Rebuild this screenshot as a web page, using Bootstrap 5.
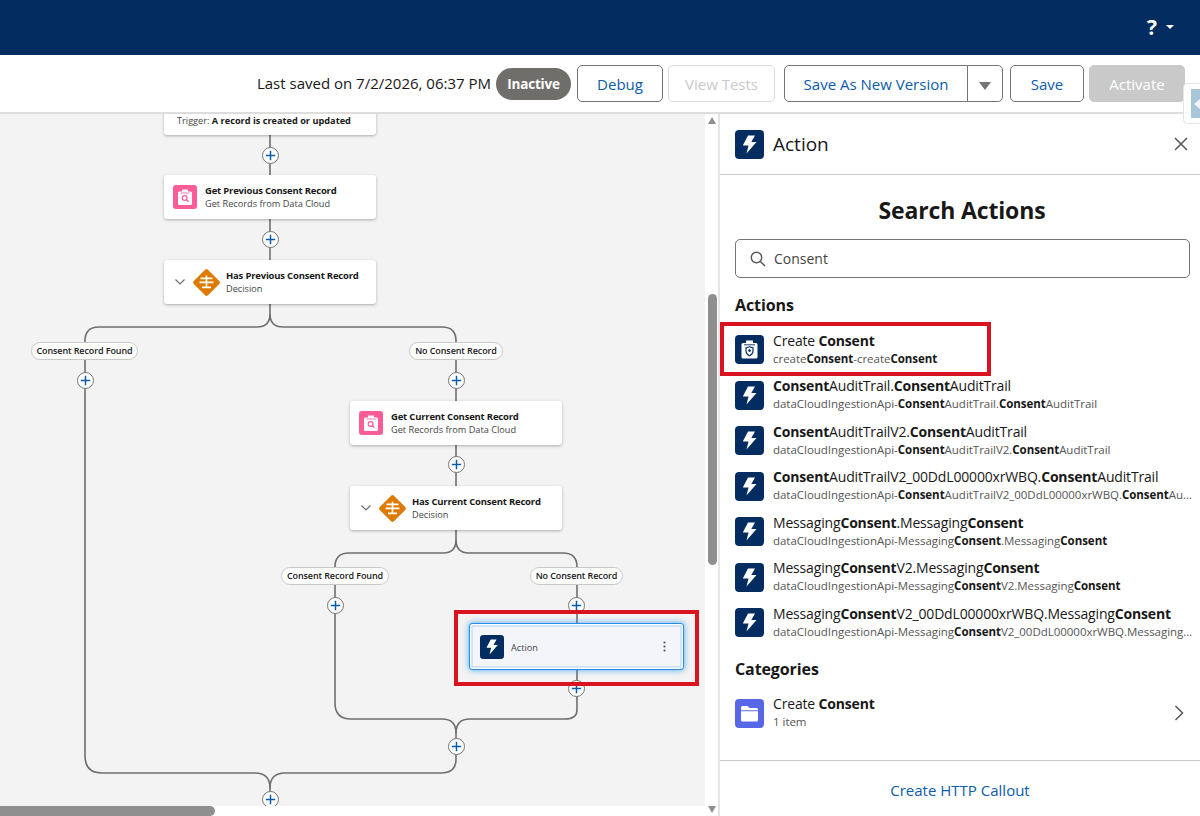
<!DOCTYPE html>
<html lang="en">
<head>
    <meta charset="UTF-8">
    <meta name="viewport" content="width=device-width, initial-scale=1.0">
    <title>Flow Builder</title>
    <link href="https://cdn.jsdelivr.net/npm/bootstrap@5.3.0/dist/css/bootstrap.min.css" rel="stylesheet">
    <style>
        body { height: 816px; overflow: hidden; font-family: "Open Sans", "Liberation Sans", sans-serif; color: #181818; background: #fff; }
        .top-bar { height: 55px; background: #032d60; color: #fff; padding-right: 26px; }
        .help-mark { font-size: 21px; font-weight: 700; line-height: 1; }
        .help-caret { width: 0; height: 0; border-left: 4px solid transparent; border-right: 4px solid transparent; border-top: 4px solid #fff; margin-left: 9px; margin-top: -2px; }
        .tool-bar { height: 59px; border-bottom: 2px solid #ddd; padding-right: 15px; position: relative; z-index: 2; background: #fff; }
        .saved-text { font-size: 15px; margin-right: 5px; }
        .state-pill { background: #706e6b; color: #fff; font-size: 13.5px; font-weight: 700; letter-spacing: -.2px; border-radius: 16px; width: 75px; height: 32px; line-height: 32px; text-align: center; margin-right: 6px; }
        .tb-btn { height: 37px; font-size: 15px; padding: 2px 0 0; border: 1px solid #747474; border-radius: 5px; color: #0b5cab; background: #fff; }
        .tb-btn:hover { color: #0b5cab; background: #fff; border-color: #747474; }
        .tb-btn:disabled { opacity: 1; }
        .btn-debug { width: 86px; margin-right: 5px; }
        .btn-tests, .btn-tests:disabled { width: 107px; margin-right: 9px; color: #c9c9c9; border-color: #dcdcdc; background: #fff; }
        .btn-newver { width: 184px; }
        .btn-arrow { width: 36px; }
        .arrow-down { display: inline-block; width: 0; height: 0; border-left: 6px solid transparent; border-right: 6px solid transparent; border-top: 8px solid #747474; }
        .btn-save { width: 74px; margin-left: 7px; margin-right: 5px; }
        .btn-activate, .btn-activate:disabled { width: 96px; background: #c9c9c9; border-color: #c9c9c9; color: #fff; }
        .side-tab { position: absolute; right: 0; top: 28px; width: 17px; height: 41px; background: #fff; border: 1px solid #e5e5e5; border-right: 0; border-radius: 5px 0 0 5px; padding: 5px 0 5px 7px; }
        .side-tab-in { display: block; height: 100%; background: #a9c6d8; position: relative; }
        .side-tab-in::after { content: ""; position: absolute; left: 3px; top: 10px; border-top: 5px solid transparent; border-bottom: 5px solid transparent; border-right: 6px solid #f1f4f6; }
        .main-area { height: 702px; }
        .canvas-col { width: 705px; position: relative; background: #fff; }
        .flow-canvas { width: 705px; height: 692px; background: #f3f3f3; position: relative; overflow: hidden; }
        .flow-lines { position: absolute; left: 0; top: 0; }
        .h-track { height: 10px; background: #fff; }
        .h-thumb { width: 215px; height: 10px; background: #8f8f8f; border-radius: 0 5px 5px 0; }
        .v-track { width: 13px; position: relative; background: #fff; }
        .v-thumb { position: absolute; left: 3px; top: 180px; width: 9px; height: 271px; background: #8f8f8f; border-radius: 5px; }
        .v-up, .v-down { position: absolute; left: 3px; width: 0; height: 0; border-left: 4.5px solid transparent; border-right: 4.5px solid transparent; }
        .v-up { top: 3px; border-bottom: 7px solid #8f8f8f; }
        .v-down { bottom: 3px; border-top: 7px solid #8f8f8f; }

        .flow-node { position: absolute; width: 212px; height: 44px; background: #fff; border-radius: 3px; box-shadow: 0 1px 3px rgba(0,0,0,.3); display: flex; align-items: center; }
        .node-title { font-size: 9.5px; font-weight: 700; letter-spacing: -.2px; line-height: 13px; white-space: nowrap; }
        .node-sub { font-size: 9.2px; line-height: 13px; color: #444; white-space: nowrap; }
        .node-pink { width: 24px; height: 24px; margin: 0 8px 0 9px; flex: none; }
        .node-chev { width: 10px; height: 6px; margin: 0 7px 0 11px; flex: none; }
        .node-diamond { width: 29px; height: 29px; margin: 0 5px 0 0; flex: none; }
        .n-trigger { left: 164px; top: -20px; height: 41px; align-items: flex-end; padding: 0 0 7px 13px; font-size: 9.2px; color: #444; }
        .n-trigger b { color: #181818; }
        .n-prev { left: 164px; top: 61px; }
        .n-hasprev { left: 164px; top: 146px; }
        .n-cur { left: 350px; top: 287px; }
        .n-hascur { left: 350px; top: 372px; }
        .n-action { left: 469px; top: 509px; width: 215px; height: 47px; background: #f3f5fb; border: 1.5px solid #2a8fe0; box-shadow: inset 0 0 0 1.5px #fff, inset 0 0 0 2.5px #a9d3f5, 0 0 6px rgba(27,150,255,.8); padding-left: 10px; }
        .n-action svg.bolt-sm { width: 24px; height: 24px; flex: none; }
        .n-action span { font-size: 9.2px; color: #444; margin: 3px 0 0 7px; }
        .n-kebab { position: absolute; right: 17px; top: 17px; width: 3px; height: 11px; }
        .branch-pill { position: absolute; height: 18px; line-height: 16px; background: #fff; border: 1px solid #c9c9c9; border-radius: 9px; font-size: 9px; font-weight: 600; letter-spacing: -.1px; text-align: center; white-space: nowrap; }
        .p-found1 { left: 31px; top: 228px; width: 107px; }
        .p-none1 { left: 409px; top: 228px; width: 94px; }
        .p-found2 { left: 281px; top: 453px; width: 108px; }
        .p-none2 { left: 530px; top: 453px; width: 93px; }
        .add-dot { position: absolute; width: 17px; height: 17px; margin: -8.5px 0 0 -8.5px; }
        .d1 { left: 270px; top: 41px; } .d2 { left: 270px; top: 125px; } .d3 { left: 85px; top: 266px; }
        .d4 { left: 456px; top: 266px; } .d5 { left: 456px; top: 350px; } .d6 { left: 335px; top: 491px; }
        .d7 { left: 576px; top: 491px; } .d8 { left: 576px; top: 574px; } .d9 { left: 456px; top: 632px; } .d10 { left: 270px; top: 685px; }
        .red-box { position: absolute; border: 4px solid #d9131f; pointer-events: none; }
        .rb-node { left: 454px; top: 496px; width: 245px; height: 76px; }

        .side-panel { width: 482px; border-left: 2px solid #e5e5e5; height: 702px; position: relative; }
        .panel-head { height: 61px; border-bottom: 1px solid #c9c9c9; padding: 0 12px 0 15px; }
        .panel-title { font-size: 19px; margin-left: 9px; }
        .panel-icon { width: 29px; height: 29px; flex: none; }
        .panel-close { width: 14px; height: 14px; margin-left: auto; }
        .panel-body-area { height: 585px; padding: 0 2px 0 15px; }
        .search-title { font-size: 23px; font-weight: 700; letter-spacing: -.15px; text-align: center; line-height: 33px; padding: 19px 9px 0 0; margin: 0; height: 64px; }
        .search-wrap { position: relative; height: 39px; margin-right: 8px; }
        .search-input { height: 39px; border: 1px solid #747474; border-radius: 5px; font-size: 14px; padding-left: 38px; color: #444; font-family: inherit; }
        .search-ico { position: absolute; left: 15px; top: 12px; width: 16px; height: 16px; }
        .sec-head { font-size: 16px; font-weight: 700; letter-spacing: -.1px; line-height: 24px; margin: 0; }
        .sec-actions { padding-top: 15px; height: 49px; }
        .act-row { height: 45.5px; display: flex; align-items: center; padding: 0; border: 0; border-radius: 0; background: transparent; }
        .act-text { margin-left: 9px; min-width: 0; flex: 1; margin-top: -1px; }
        .act-title { font-size: 14px; letter-spacing: -.17px; line-height: 18px; white-space: nowrap; color: #181818; }
        .act-sub { font-size: 11.5px; letter-spacing: -.03px; line-height: 17px; white-space: nowrap; overflow: hidden; text-overflow: ellipsis; color: #555; }
        .act-title b, .act-sub b { color: #181818; }
        .sec-cats { padding-top: 11px; height: 45px; }
        .rb-item { left: 0; top: 208px; width: 271px; height: 54px; }
        .cat-chev { width: 10px; height: 16px; margin-right: 14px; flex: none; }
        .panel-foot { height: 56px; border-top: 1px solid #c9c9c9; font-size: 15px; padding-top: 3px; }
        .panel-foot a { color: #0b5cab; text-decoration: none; }
    </style>
</head>
<body>
    <svg width="0" height="0" class="position-absolute">
        <symbol id="i-bolt" viewBox="0 0 29 29">
            <rect width="29" height="29" rx="4" fill="#032d60"/>
            <path d="M13 5.5 H20 L16.3 12 H21.5 L11.5 23.5 L13.5 15.5 H7.8 Z" fill="#fff"/>
        </symbol>
        <symbol id="i-pink" viewBox="0 0 24 24">
            <rect width="24" height="24" rx="3" fill="#fe5c97"/>
            <path d="M9 4.5 H15 V6.5 H17.5 Q19 6.5 19 8 V18.5 Q19 20 17.5 20 H6.5 Q5 20 5 18.5 V8 Q5 6.5 6.5 6.5 H9 Z" fill="#fff"/>
            <path d="M7.5 8 H16.5" stroke="#fe5c97" stroke-width=".8"/>
            <circle cx="11.6" cy="13" r="2.4" fill="none" stroke="#fe5c97" stroke-width="1.2"/>
            <path d="M13.4 14.8 L15.5 16.8" stroke="#fe5c97" stroke-width="1.2"/>
        </symbol>
        <symbol id="i-decide" viewBox="0 0 29 29">
            <rect x="4.5" y="4.5" width="20" height="20" rx="2" fill="#dd7a01" transform="rotate(45 14.5 14.5)"/>
            <path d="M13.7 7.5 H15.3 V9.5 H20.5 V11.3 H15.3 V13.5 H21.5 V15.3 H15.3 V18.5 H19 V20.3 H10 V18.5 H13.7 V15.3 H7.5 V13.5 H13.7 V11.3 H8.5 V9.5 H13.7 Z" fill="#fff"/>
        </symbol>
        <symbol id="i-add" viewBox="0 0 17 17">
            <circle cx="8.5" cy="8.5" r="8" fill="#fff" stroke="#747474" stroke-width="1"/>
            <path d="M8.5 3.8 V13.2 M3.8 8.5 H13.2" stroke="#0b5cab" stroke-width="1.5"/>
        </symbol>
        <symbol id="i-consent" viewBox="0 0 29 29">
            <rect width="29" height="29" rx="4" fill="#032d60"/>
            <path d="M11 5.5 H18 V8 H21 Q22.5 8 22.5 9.5 V22 Q22.5 23.5 21 23.5 H8 Q6.5 23.5 6.5 22 V9.5 Q6.5 8 8 8 H11 Z" fill="#fff"/>
            <path d="M9 9.8 H20" stroke="#032d60" stroke-width=".9"/>
            <path d="M14.5 11.8 L18 13 V15.8 Q18 19 14.5 20.8 Q11 19 11 15.8 V13 Z" fill="none" stroke="#032d60" stroke-width="1.2"/>
            <circle cx="14.5" cy="15.6" r="1.3" fill="#032d60"/>
        </symbol>
        <symbol id="i-folder" viewBox="0 0 29 29">
            <rect width="29" height="29" rx="4" fill="#5867e8"/>
            <path d="M6 8.5 Q6 7 7.5 7 H12.5 L14.5 9 H21.5 Q23 9 23 10.5 V11.2 H6 Z M6 12.3 H23 V21 Q23 22.5 21.5 22.5 H7.5 Q6 22.5 6 21 Z" fill="#fff"/>
        </symbol>
    </svg>

    <!-- Top bar -->
    <div class="top-bar d-flex align-items-center justify-content-end">
        <span class="help-mark">?</span>
        <span class="help-caret"></span>
    </div>

    <!-- Toolbar -->
    <div class="tool-bar d-flex align-items-center justify-content-end">
        <span class="saved-text">Last saved on 7/2/2026, 06:37 PM</span>
        <span class="state-pill">Inactive</span>
        <button class="btn tb-btn btn-debug">Debug</button>
        <button class="btn tb-btn btn-tests" disabled>View Tests</button>
        <div class="btn-group">
            <button class="btn tb-btn btn-newver">Save As New Version</button>
            <button class="btn tb-btn btn-arrow"><span class="arrow-down"></span></button>
        </div>
        <button class="btn tb-btn btn-save">Save</button>
        <button class="btn tb-btn btn-activate" disabled>Activate</button>
        <span class="side-tab"><span class="side-tab-in"></span></span>
    </div>

    <div class="main-area d-flex">
        <!-- Canvas -->
        <div class="canvas-col">
            <div class="flow-canvas">
                <svg class="flow-lines" width="705" height="692" fill="none" stroke="#6f6f6f" stroke-width="1.6">
                    <path d="M270 21 V146"/>
                    <path d="M270 190 V200 Q270 213 257 213 H99 Q85 213 85 227 V642 Q85 659 102 659 H255 Q270 659 270 674 V692"/>
                    <path d="M270 200 Q270 213 283 213 H442 Q456 213 456 227 V287"/>
                    <path d="M456 331 V372"/>
                    <path d="M456 416 V426 Q456 439 443 439 H349 Q335 439 335 453 V589 Q335 605 351 605 H442 Q456 605 456 619 V645 Q456 659 441 659 H285 Q270 659 270 674"/>
                    <path d="M456 426 Q456 439 469 439 H563 Q577 439 577 453 V509"/>
                    <path d="M577 556 V596 Q577 605 565 605 H470 Q456 605 456 619"/>
                </svg>

                <div class="flow-node n-trigger"><span>Trigger: <b>A record is created or updated</b></span></div>
                <div class="flow-node n-prev">
                    <svg class="node-pink"><use href="#i-pink"/></svg>
                    <div><div class="node-title">Get Previous Consent Record</div><div class="node-sub">Get Records from Data Cloud</div></div>
                </div>
                <div class="flow-node n-hasprev">
                    <svg class="node-chev" viewBox="0 0 10 6" fill="none" stroke="#706e6b" stroke-width="1.2"><path d="M.5 .5 L5 5 L9.5 .5"/></svg>
                    <svg class="node-diamond"><use href="#i-decide"/></svg>
                    <div><div class="node-title">Has Previous Consent Record</div><div class="node-sub">Decision</div></div>
                </div>
                <div class="flow-node n-cur">
                    <svg class="node-pink"><use href="#i-pink"/></svg>
                    <div><div class="node-title">Get Current Consent Record</div><div class="node-sub">Get Records from Data Cloud</div></div>
                </div>
                <div class="flow-node n-hascur">
                    <svg class="node-chev" viewBox="0 0 10 6" fill="none" stroke="#706e6b" stroke-width="1.2"><path d="M.5 .5 L5 5 L9.5 .5"/></svg>
                    <svg class="node-diamond"><use href="#i-decide"/></svg>
                    <div><div class="node-title">Has Current Consent Record</div><div class="node-sub">Decision</div></div>
                </div>

                <div class="branch-pill p-found1">Consent Record Found</div>
                <div class="branch-pill p-none1">No Consent Record</div>
                <div class="branch-pill p-found2">Consent Record Found</div>
                <div class="branch-pill p-none2">No Consent Record</div>

                <svg class="add-dot d1"><use href="#i-add"/></svg>
                <svg class="add-dot d2"><use href="#i-add"/></svg>
                <svg class="add-dot d3"><use href="#i-add"/></svg>
                <svg class="add-dot d4"><use href="#i-add"/></svg>
                <svg class="add-dot d5"><use href="#i-add"/></svg>
                <svg class="add-dot d6"><use href="#i-add"/></svg>
                <svg class="add-dot d7"><use href="#i-add"/></svg>
                <svg class="add-dot d8"><use href="#i-add"/></svg>
                <svg class="add-dot d9"><use href="#i-add"/></svg>
                <svg class="add-dot d10"><use href="#i-add"/></svg>

                <div class="flow-node n-action">
                    <svg class="bolt-sm" viewBox="0 0 29 29"><use href="#i-bolt"/></svg>
                    <span>Action</span>
                    <svg class="n-kebab" viewBox="0 0 3 11" fill="#555"><circle cx="1.5" cy="1.5" r="1.1"/><circle cx="1.5" cy="5.5" r="1.1"/><circle cx="1.5" cy="9.5" r="1.1"/></svg>
                </div>
                <div class="red-box rb-node"></div>
            </div>
            <div class="h-track"><div class="h-thumb"></div></div>
        </div>
        <div class="v-track"><span class="v-up"></span><span class="v-thumb"></span><span class="v-down"></span></div>

        <!-- Action panel -->
        <div class="side-panel">
            <div class="panel-head d-flex align-items-center">
                <svg class="panel-icon"><use href="#i-bolt"/></svg>
                <span class="panel-title">Action</span>
                <svg class="panel-close" viewBox="0 0 14 14" stroke="#555" stroke-width="1.5"><path d="M1 1 L13 13 M13 1 L1 13"/></svg>
            </div>
            <div class="panel-body-area">
                <h2 class="search-title">Search Actions</h2>
                <div class="search-wrap">
                    <svg class="search-ico" viewBox="0 0 16 16" fill="none" stroke="#555" stroke-width="1.4"><circle cx="6.5" cy="6.5" r="5.2"/><path d="M10.4 10.4 L15 15"/></svg>
                    <input class="form-control search-input" type="text" value="Consent">
                </div>
                <h3 class="sec-head sec-actions">Actions</h3>
                <div class="list-group">
                    <div class="act-row"><svg class="panel-icon"><use href="#i-consent"/></svg><div class="act-text"><div class="act-title">Create <b>Consent</b></div><div class="act-sub">create<b>Consent</b>-create<b>Consent</b></div></div></div>
                    <div class="act-row"><svg class="panel-icon"><use href="#i-bolt"/></svg><div class="act-text"><div class="act-title"><b>Consent</b>AuditTrail.<b>Consent</b>AuditTrail</div><div class="act-sub">dataCloudIngestionApi-<b>Consent</b>AuditTrail.<b>Consent</b>AuditTrail</div></div></div>
                    <div class="act-row"><svg class="panel-icon"><use href="#i-bolt"/></svg><div class="act-text"><div class="act-title"><b>Consent</b>AuditTrailV2.<b>Consent</b>AuditTrail</div><div class="act-sub">dataCloudIngestionApi-<b>Consent</b>AuditTrailV2.<b>Consent</b>AuditTrail</div></div></div>
                    <div class="act-row"><svg class="panel-icon"><use href="#i-bolt"/></svg><div class="act-text"><div class="act-title"><b>Consent</b>AuditTrailV2_00DdL00000xrWBQ.<b>Consent</b>AuditTrail</div><div class="act-sub">dataCloudIngestionApi-<b>Consent</b>AuditTrailV2_00DdL00000xrWBQ.<b>Consent</b>AuditTrail</div></div></div>
                    <div class="act-row"><svg class="panel-icon"><use href="#i-bolt"/></svg><div class="act-text"><div class="act-title">Messaging<b>Consent</b>.Messaging<b>Consent</b></div><div class="act-sub">dataCloudIngestionApi-Messaging<b>Consent</b>.Messaging<b>Consent</b></div></div></div>
                    <div class="act-row"><svg class="panel-icon"><use href="#i-bolt"/></svg><div class="act-text"><div class="act-title">Messaging<b>Consent</b>V2.Messaging<b>Consent</b></div><div class="act-sub">dataCloudIngestionApi-Messaging<b>Consent</b>V2.Messaging<b>Consent</b></div></div></div>
                    <div class="act-row"><svg class="panel-icon"><use href="#i-bolt"/></svg><div class="act-text"><div class="act-title">Messaging<b>Consent</b>V2_00DdL00000xrWBQ.Messaging<b>Consent</b></div><div class="act-sub">dataCloudIngestionApi-Messaging<b>Consent</b>V2_00DdL00000xrWBQ.Messaging<b>Consent</b></div></div></div>
                </div>
                <h3 class="sec-head sec-cats">Categories</h3>
                <div class="act-row">
                    <svg class="panel-icon"><use href="#i-folder"/></svg>
                    <div class="act-text"><div class="act-title">Create <b>Consent</b></div><div class="act-sub">1 item</div></div>
                    <svg class="cat-chev" viewBox="0 0 10 16" fill="none" stroke="#555" stroke-width="1.5"><path d="M1.5 1 L8.5 8 L1.5 15"/></svg>
                </div>
            </div>
            <div class="panel-foot d-flex align-items-center justify-content-center"><a href="#">Create HTTP Callout</a></div>
            <div class="red-box rb-item"></div>
        </div>
    </div>

    <script src="https://cdn.jsdelivr.net/npm/bootstrap@5.3.0/dist/js/bootstrap.bundle.min.js"></script>
</body>
</html>
